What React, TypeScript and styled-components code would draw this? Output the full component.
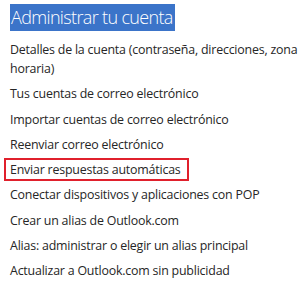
import React from "react";
import styled, { createGlobalStyle } from "styled-components";

const Global = createGlobalStyle`
  html, body { margin: 0; padding: 0; background: #fff; }
  body { font-family: "Open Sans", "Noto Sans", sans-serif; }
`;

const Page = styled.div`
  width: 300px;
  height: 284px;
  box-sizing: border-box;
  padding: 4px 0 0 10px;
  overflow: hidden;
`;

const Title = styled.h1`
  display: inline-block;
  margin: 0;
  padding: 0 2px 0 1px;
  height: 27px;
  line-height: 27px;
  background: #3b74c9;
  color: #ffffff;
  font-family: "Open Sans", sans-serif;
  font-size: 18px;
  font-weight: 300;
  letter-spacing: -0.65px;
`;

const List = styled.ul`
  list-style: none;
  margin: 9px 0 0 0;
  padding: 0;
  display: flex;
  flex-direction: column;
  gap: 6.3px;
`;

const Item = styled.li<{ $marked?: boolean }>`
  font-size: 12.4px;
  line-height: 19px;
  color: #262626;
  letter-spacing: -0.2px;
  margin-left: ${(p) => (p.$marked ? "-6px" : "0")};
  padding-left: ${(p) => (p.$marked ? "4px" : "0")};
  width: ${(p) => (p.$marked ? "177px" : "auto")};
  border: ${(p) => (p.$marked ? "2px solid #e0202c" : "none")};
  margin-top: ${(p) => (p.$marked ? "-2px" : "0")};
  margin-bottom: ${(p) => (p.$marked ? "-2px" : "0")};
`;

const items = [
  "Detalles de la cuenta (contraseña, direcciones, zona horaria)",
  "Tus cuentas de correo electrónico",
  "Importar cuentas de correo electrónico",
  "Reenviar correo electrónico",
  "Enviar respuestas automáticas",
  "Conectar dispositivos y aplicaciones con POP",
  "Crear un alias de Outlook.com",
  "Alias: administrar o elegir un alias principal",
  "Actualizar a Outlook.com sin publicidad",
];

export default function App() {
  return (
    <>
      <Global />
      <Page>
        <Title>Administrar tu cuenta</Title>
        <List>
          {items.map((t, i) => (
            <Item key={i} $marked={i === 4}>
              {t}
            </Item>
          ))}
        </List>
      </Page>
    </>
  );
}
